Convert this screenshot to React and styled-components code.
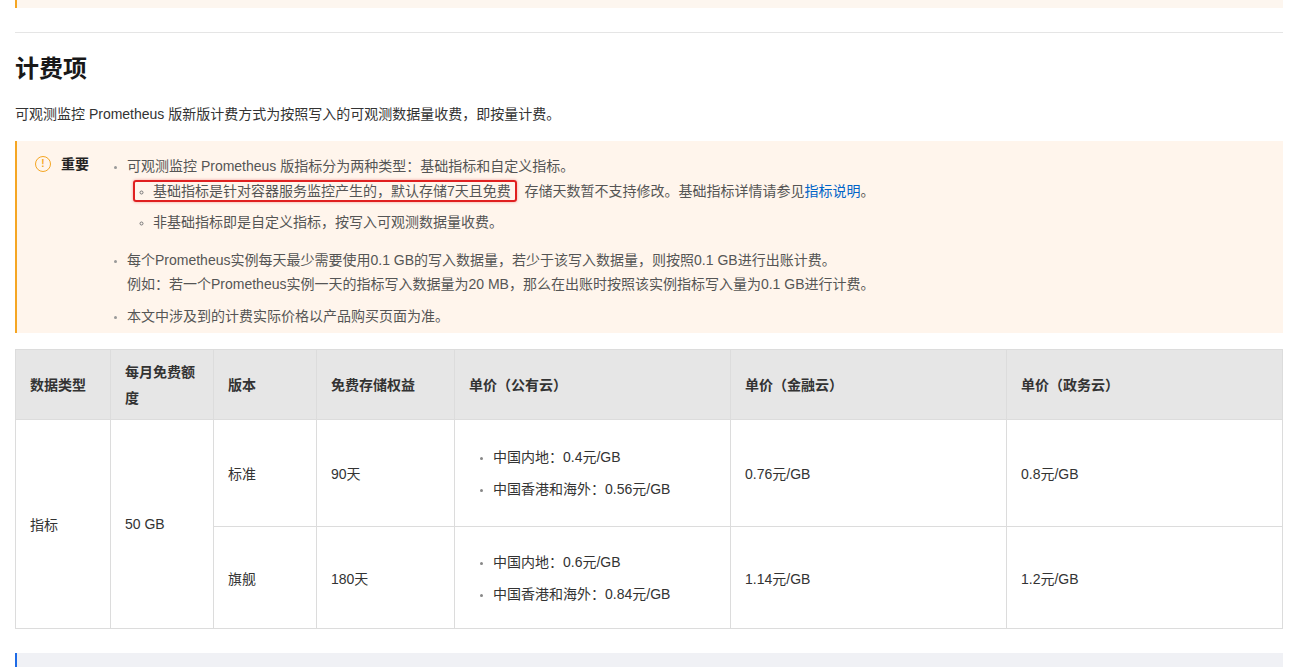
import React from "react";
import styled, { createGlobalStyle } from "styled-components";

const G = createGlobalStyle`
  body{margin:0;background:#fff;font-family:"Liberation Sans","Noto Sans CJK SC",sans-serif;color:#333;}
`;
const Page = styled.div`padding:0 12px 0 15px;height:667px;overflow:hidden;`;
const TopBox = styled.div`height:8px;background:#fdf6ef;border-left:2px solid #f5a623;`;
const Hr = styled.div`height:1px;background:#e5e5e5;margin-top:24px;`;
const H2 = styled.h2`font-size:24px;font-weight:600;color:#181818;margin:20px 0 0;line-height:32px;`;
const P = styled.p`font-size:14px;margin:18px 0 0;line-height:22px;color:#333;`;
const Note = styled.div`margin-top:16px;background:#fff5ec;border-left:2px solid #f5a623;display:flex;padding:13px 0 10px 18px;height:192px;box-sizing:border-box;`;
const Label = styled.div`display:flex;align-items:flex-start;gap:10px;font-size:14px;font-weight:700;color:#222;width:80px;flex-shrink:0;line-height:20px;`;
const Icon = styled.span`width:14px;height:14px;border:1.3px solid #f5a623;border-radius:50%;color:#f5a623;font-size:10px;display:flex;align-items:center;justify-content:center;margin-top:2px;font-weight:700;`;
const UL = styled.ul`margin:0;padding:0 0 0 12px;font-size:14px;line-height:24px;color:#555;list-style:disc;`;
const LI = styled.li`margin-bottom:${p=>p.mb||0}px;&::marker{color:#999;font-size:10px;}`;
const Sub = styled.ul`margin:0;padding:0 0 0 26px;list-style:circle;`;
const SubLi = styled.li`line-height:${p=>p.lh||24}px;&::marker{color:#777;font-size:10px;}`;
const Hl = styled.span`border:2px solid #e02020;border-radius:3px;padding:1px 4px 1px 18px;margin-left:-20px;box-shadow:0 0 3px rgba(224,32,32,.4);`;
const A = styled.a`color:#0064c8;text-decoration:none;`;
const Table = styled.table`margin-top:16px;width:100%;border-collapse:collapse;font-size:14px;color:#333;
  td,th{border:1px solid #dcdcdc;padding:0 14px;text-align:left;vertical-align:middle;}
  th{background:#e6e6e6;font-weight:700;height:69px;line-height:26px;color:#333;}`;
const Cell = styled.td`height:${p=>p.h}px;`;
const PL = styled.ul`margin:0;padding:0 0 0 24px;line-height:32px;li::marker{color:#888;font-size:10px;}`;
const Bottom = styled.div`margin-top:24px;height:20px;background:#f0f1f5;border-left:2px solid #1e6be6;`;

const price = (a,b)=>(<PL><li>中国内地：{a}元/GB</li><li>中国香港和海外：{b}元/GB</li></PL>);

export default function App(){
  return(<><G/><Page>
    <TopBox/>
    <Hr/>
    <H2>计费项</H2>
    <P>可观测监控 Prometheus 版新版计费方式为按照写入的可观测数据量收费，即按量计费。</P>
    <Note>
      <Label><Icon>!</Icon>重要</Label>
      <UL>
        <LI mb={8}>可观测监控 Prometheus 版指标分为两种类型：基础指标和自定义指标。
          <Sub>
            <SubLi lh={26}><Hl>基础指标是针对容器服务监控产生的，默认存储7天且免费</Hl>&nbsp;&nbsp;存储天数暂不支持修改。基础指标详情请参见<A href="#">指标说明</A>。</SubLi>
            <SubLi lh={36}>非基础指标即是自定义指标，按写入可观测数据量收费。</SubLi>
          </Sub>
        </LI>
        <LI mb={8}>每个Prometheus实例每天最少需要使用0.1 GB的写入数据量，若少于该写入数据量，则按照0.1 GB进行出账计费。<br/>例如：若一个Prometheus实例一天的指标写入数据量为20 MB，那么在出账时按照该实例指标写入量为0.1 GB进行计费。</LI>
        <LI>本文中涉及到的计费实际价格以产品购买页面为准。</LI>
      </UL>
    </Note>
    <Table>
      <colgroup>
        <col style={{width:95}}/><col style={{width:103}}/><col style={{width:103}}/><col style={{width:138}}/><col style={{width:276}}/><col style={{width:276}}/><col/>
      </colgroup>
      <thead><tr><th>数据类型</th><th>每月免费额度</th><th>版本</th><th>免费存储权益</th><th>单价（公有云）</th><th>单价（金融云）</th><th>单价（政务云）</th></tr></thead>
      <tbody>
        <tr><Cell h={106} rowSpan={2}>指标</Cell><Cell h={106} rowSpan={2}>50 GB</Cell><Cell h={106}>标准</Cell><Cell h={106}>90天</Cell><Cell h={106}>{price("0.4","0.56")}</Cell><Cell h={106}>0.76元/GB</Cell><Cell h={106}>0.8元/GB</Cell></tr>
        <tr><Cell h={101}>旗舰</Cell><Cell h={101}>180天</Cell><Cell h={101}>{price("0.6","0.84")}</Cell><Cell h={101}>1.14元/GB</Cell><Cell h={101}>1.2元/GB</Cell></tr>
      </tbody>
    </Table>
    <Bottom/>
  </Page></>);
}
